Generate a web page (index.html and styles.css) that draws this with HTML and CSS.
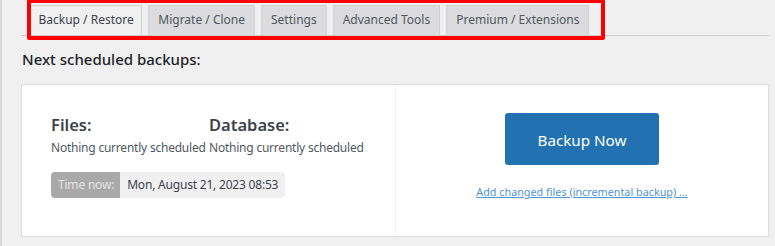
FILE: index.html
```html
<!DOCTYPE html>
<html lang="en">
<head>
<meta charset="utf-8">
<title>UpdraftPlus Backup / Restore</title>
<link rel="stylesheet" href="styles.css">
</head>
<body>
<div class="screen">
  <nav class="tabs">
    <a class="tab active">Backup / Restore</a>
    <a class="tab">Migrate / Clone</a>
    <a class="tab">Settings</a>
    <a class="tab">Advanced Tools</a>
    <a class="tab">Premium / Extensions</a>
  </nav>
  <div class="highlight"></div>
  <h2 class="section-title">Next scheduled backups:</h2>
  <div class="panel">
    <div class="schedule">
      <div class="cols">
        <div class="col">
          <h3 class="col-title">Files:</h3>
          <p class="col-text">Nothing currently scheduled</p>
        </div>
        <div class="col">
          <h3 class="col-title">Database:</h3>
          <p class="col-text">Nothing currently scheduled</p>
        </div>
      </div>
      <div class="time">
        <span class="time-label">Time now:</span>
        <span class="time-value">Mon, August 21, 2023 08:53</span>
      </div>
    </div>
    <div class="actions">
      <button class="backup-btn">Backup Now</button>
      <a class="inc-link">Add changed files (incremental backup) ...</a>
    </div>
  </div>
</div>
</body>
</html>
```

FILE: styles.css
```css
* { box-sizing: border-box; }
html, body { margin: 0; }
body {
  background: #f0f0f1;
  font-family: "Noto Sans", "Open Sans", sans-serif;
  color: #3c434a;
}
.screen {
  position: relative;
  height: 246px;
  border-left: 2px solid #d8d9dc;
  padding: 5px 6px 0 19px;
}
.tabs {
  display: flex;
  gap: 6px;
  padding-left: 9px;
  border-bottom: 1px solid #cdcfd2;
  height: 31px;
}
.tab {
  display: block;
  height: 30px;
  line-height: 28px;
  padding: 0 9px;
  font-size: 12px;
  color: #50575e;
  background: #dcdcde;
  border: 1px solid #d0d1d4;
  border-bottom: none;
  text-decoration: none;
}
.tab.active {
  background: #f0f0f1;
  color: #3c434a;
  padding: 0 7.5px;
}
.highlight {
  position: absolute;
  left: 25px;
  top: -1px;
  width: 578px;
  height: 41px;
  border: 4px solid #ff0000;
  border-radius: 2px;
}
.section-title {
  margin: 13px 0 0 1px;
  font-size: 15px;
  line-height: 20px;
  font-weight: 500;
  color: #1d2327;
}
.panel {
  margin-top: 15px;
  height: 153px;
  background: #fff;
  border: 1px solid #dcdcde;
  display: flex;
}
.schedule {
  width: 374px;
  border-right: 1px solid #f0f0f1;
  padding: 30px 0 0 29px;
}
.cols {
  display: grid;
  grid-template-columns: 158px 158px;
}
.col-title {
  margin: 0;
  font-size: 16.5px;
  line-height: 20px;
  font-weight: 600;
  color: #3c434a;
}
.col-text {
  margin: 4px 0 0;
  font-size: 12px;
  letter-spacing: -0.22px;
  line-height: 18px;
  color: #50575e;
  white-space: nowrap;
}
.time {
  display: inline-flex;
  margin-top: 15px;
  height: 26px;
  border-radius: 4px;
  overflow: hidden;
  font-size: 12px;
  letter-spacing: -0.2px;
  line-height: 26px;
}
.time-label {
  background: #a9a9aa;
  color: #e4e4e4;
  padding: 0 6px 0 7px;
}
.time-value {
  background: #f0f0f1;
  color: #3c434a;
  padding: 0 7px;
}
.actions {
  flex: 1;
  display: flex;
  flex-direction: column;
  align-items: center;
  padding-top: 28px;
}
.backup-btn {
  width: 154px;
  height: 52px;
  border: none;
  border-radius: 3px;
  background: #2271b1;
  color: #fff;
  font-family: inherit;
  font-size: 15.2px;
  padding: 2px 0 0;
}
.inc-link {
  margin-top: 19px;
  font-size: 10.8px;
  line-height: 16px;
  color: #4f94d4;
  text-decoration: underline;
}
```
